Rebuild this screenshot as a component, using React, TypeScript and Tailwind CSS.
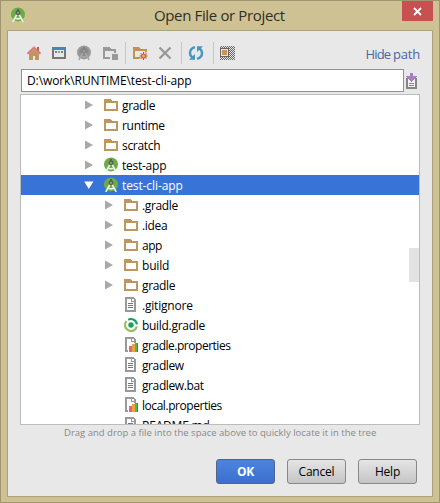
import React from "react";

type IconProps = { className?: string };

function StudioIcon({ className = "", gray = false }: IconProps & { gray?: boolean }) {
  return (
    <svg className={className} width="16" height="16" viewBox="0 0 16 16">
      <circle cx="8" cy="7.4" r="7" fill={gray ? "#9b9b9b" : "#6cac45"} />
      {gray && <circle cx="8" cy="7" r="4.6" fill="#8b8b8b" />}
      <path d="M7.2 2h1.6v2H7.2z" fill={gray ? "#777" : "#4e5a4c"} />
      <circle cx="8" cy="5.8" r="2.5" fill={gray ? "#858585" : "#59635a"} />
      <circle cx="8" cy="5.8" r="0.9" fill={gray ? "#aaa" : "#a9b3a5"} />
      <path
        d="M6.7 7.8 2.8 14.8M9.3 7.8l3.9 7M4.4 10.4q3.6 3 7.2 0"
        fill="none"
        stroke={gray ? "#a8a8a8" : "#eef3e9"}
        strokeWidth="1.7"
      />
    </svg>
  );
}

function FolderIcon() {
  return (
    <svg width="16" height="16" viewBox="0 0 16 16" shapeRendering="crispEdges">
      <path d="M1 2h6l2 2h6v10H1zM3 6v6h10V6z" fill="#bd9660" fillRule="evenodd" />
    </svg>
  );
}

function FileIcon({ chart = false }: { chart?: boolean }) {
  return (
    <svg width="16" height="16" viewBox="0 0 16 16" shapeRendering="crispEdges">
      <path d="M2 0h8l3 3v12H2zM4 2v11h7V5H8V2z" fill="#999" fillRule="evenodd" />
      <path d="M9 2h1l1 1v1H9z" fill="#f7f7f7" />
      {chart ? (
        <>
          <path d="M5 9h3V7h3V6h4v9H5z" fill="#fff" />
          <path d="M6 9h3v6H6z" fill="#e46a67" />
          <path d="M9 7h3v8H9z" fill="#eca044" />
          <path d="M12 6h3v9h-3z" fill="#4cbb4a" />
          <path d="M14 6h1v9h-1z" fill="#338f3c" />
        </>
      ) : (
        <path d="M5 6h5v1H5zM5 8h5v1H5zM5 10h5v1H5z" fill="#4385ad" />
      )}
    </svg>
  );
}

function GradleIcon() {
  return (
    <svg width="16" height="16" viewBox="0 0 16 16">
      <path d="M5.2 2.7A6 6 0 0 1 13.9 7.4" fill="none" stroke="#17a05e" strokeWidth="2.2" />
      <path d="M13.8 9.4A6 6 0 1 1 3.4 4.1" fill="none" stroke="#92bf5c" strokeWidth="2.2" />
      <circle cx="8" cy="8" r="2.7" fill="#17a05e" />
    </svg>
  );
}

type Kind = "folder" | "studio" | "file" | "chart" | "gradle";
type Row = { name: string; kind: Kind; nested?: boolean; open?: boolean; spacing: string };

const rows: Row[] = [
  { name: "gradle", kind: "folder", spacing: "tracking-[-0.35px]" },
  { name: "runtime", kind: "folder", spacing: "tracking-[-0.3px]" },
  { name: "scratch", kind: "folder", spacing: "tracking-[-0.3px]" },
  { name: "test-app", kind: "studio", spacing: "tracking-[-0.25px]" },
  { name: "test-cli-app", kind: "studio", open: true, spacing: "tracking-[-0.1px]" },
  { name: ".gradle", kind: "folder", nested: true, spacing: "tracking-[-0.35px]" },
  { name: ".idea", kind: "folder", nested: true, spacing: "tracking-[-0.3px]" },
  { name: "app", kind: "folder", nested: true, spacing: "tracking-[-0.5px]" },
  { name: "build", kind: "folder", nested: true, spacing: "tracking-[-0.2px]" },
  { name: "gradle", kind: "folder", nested: true, spacing: "tracking-[-0.35px]" },
  { name: ".gitignore", kind: "file", nested: true, spacing: "tracking-[-0.2px]" },
  { name: "build.gradle", kind: "gradle", nested: true, spacing: "tracking-[-0.3px]" },
  { name: "gradle.properties", kind: "chart", nested: true, spacing: "tracking-[-0.48px]" },
  { name: "gradlew", kind: "file", nested: true, spacing: "tracking-[-0.4px]" },
  { name: "gradlew.bat", kind: "file", nested: true, spacing: "tracking-[-0.4px]" },
  { name: "local.properties", kind: "chart", nested: true, spacing: "tracking-[-0.45px]" },
  { name: "README.md", kind: "file", nested: true, spacing: "tracking-[-0.2px]" },
];

function KindIcon({ kind }: { kind: Kind }) {
  if (kind === "folder") return <FolderIcon />;
  if (kind === "studio") return <StudioIcon />;
  if (kind === "gradle") return <GradleIcon />;
  return <FileIcon chart={kind === "chart"} />;
}

function TreeRow({ row }: { row: Row }) {
  const expandable = row.kind === "folder" || row.kind === "studio";
  return (
    <div
      className={`flex h-5 shrink-0 items-center ${row.nested ? "pl-[82px]" : "pl-[62px]"} ${
        row.open ? "bg-[#3874d7] text-white" : "text-black"
      }`}
    >
      <svg className="mr-1 shrink-0" width="16" height="16" viewBox="0 0 16 16">
        {expandable &&
          (row.open ? (
            <path d="M1.2 4.5h9.2L5.8 12z" fill="#fff" />
          ) : (
            <path d="M2 3.5v9l8-4.5z" fill="#a9a9a9" />
          ))}
      </svg>
      <span className="mr-[3px] shrink-0">
        <KindIcon kind={row.kind} />
      </span>
      <span className={`pt-[2px] text-[12px] leading-5 ${row.spacing}`}>{row.name}</span>
    </div>
  );
}

function Separator() {
  return <span className="h-[22px] w-px bg-[#c8c8c8]" />;
}

function Toolbar() {
  return (
    <div className="flex h-[22px] items-center pl-[18px]">
      <svg width="16" height="16" viewBox="0 0 16 16">
        <path d="M3 8.5 8 4l5 4.5V15H9v-4H7v4H3z" fill="#bd9662" />
        <path d="M11 2h2v4h-2z" fill="#b0635c" />
        <path d="M1.5 8.7 8 2.7l6.5 6" fill="none" stroke="#dc7874" strokeWidth="2" />
      </svg>
      <svg className="ml-[9px]" width="16" height="16" viewBox="0 0 16 16" shapeRendering="crispEdges">
        <path d="M1 2h14v12H1zM3 5v7h10V5z" fill="#777" fillRule="evenodd" />
        <path d="M1 2h14v3H1z" fill="#3d8abb" />
        <path d="M4 6h2v2H4zM10 6h2v2h-2z" fill="#498db5" />
        <path d="M7 6h2v2H7z" fill="#d48d42" />
      </svg>
      <StudioIcon className="ml-[9px]" gray />
      <svg className="ml-[10px]" width="16" height="16" viewBox="0 0 16 16" shapeRendering="crispEdges">
        <path d="M1 2h6l2 2h5v4h-2V6H3v6h5v2H1z" fill="#999" />
        <path d="M10 9h6v6h-6z" fill="#999" />
      </svg>
      <span className="ml-[7px] flex"><Separator /></span>
      <svg className="ml-[6px]" width="17" height="16" viewBox="0 0 17 16">
        <path d="M1 2h6l2 2h6v10H1zM3 6v6h10V6z" fill="#c39250" fillRule="evenodd" />
        <path d="M11.5 6v10M6.5 11h10M8 7.5l7 7M15 7.5l-7 7" stroke="#e8e8e8" strokeWidth="1.8" />
        <path d="M11.5 7v8M7.5 11h8M8.7 8.2l5.6 5.6M14.3 8.2l-5.6 5.6" stroke="#ce4c2b" strokeWidth="1" />
        <circle cx="11.5" cy="11" r="2" fill="#efb06b" stroke="#ce4c2b" />
      </svg>
      <svg className="ml-[8px] mr-px" width="16" height="16" viewBox="0 0 16 16">
        <path d="m2.5 2.5 11 11m0-11-11 11" stroke="#999" strokeWidth="2.4" />
      </svg>
      <span className="ml-[7px] flex"><Separator /></span>
      <svg className="ml-[6px] mr-px" width="16" height="16" viewBox="0 0 16 16">
        <path d="M7 2.2Q2 3.4 2 8q0 2.8 2.8 4.8M9 13.8q5-1.2 5-5.8 0-2.8-2.8-4.8" fill="none" stroke="#4795c2" strokeWidth="2.4" />
        <path d="M1 14.8h6V9zM15 1.2H9V7z" fill="#4795c2" />
      </svg>
      <span className="ml-[8px] flex"><Separator /></span>
      <svg className="ml-[6px]" width="16" height="16" viewBox="0 0 16 16" shapeRendering="crispEdges">
        <defs>
          <pattern id="checks" width="2" height="2" patternUnits="userSpaceOnUse">
            <path d="M0 0h1v1H0zM1 1h1v1H1z" fill="#666" />
          </pattern>
        </defs>
        <path d="M0 1h15v14H0z" fill="url(#checks)" />
        <path d="M0 3h9v9H0z" fill="#666" />
        <path d="M1 4h7v7H1z" fill="#eee4d4" />
        <path d="M2 5h5v5H2z" fill="#cf924d" />
      </svg>
      <span className="ml-auto mr-[12px] pt-px text-[13px] leading-5 tracking-[-0.75px] text-[#4c65a5]">
        <span className="tracking-[-0.8px]">Hide</span> <span className="tracking-[-0.2px]">path</span>
      </span>
    </div>
  );
}

export default function App() {
  return (
    <div className="flex h-[503px] w-[440px] flex-col border border-[#a0966d] bg-[#cec294] font-['Open_Sans','Noto_Sans',sans-serif]">
      <header className="flex h-[29px] shrink-0 items-start pl-[9px]">
        <StudioIcon className="mt-[6px]" />
        <h1 className="ml-[128px] mt-[2px] whitespace-nowrap text-[15px] leading-6 tracking-[-0.36px] text-[#302e25]">
          Open File or Project
        </h1>
        <div className="ml-auto mr-[6px] flex h-5 w-[31px] items-center justify-center bg-[#c75050]">
          <svg width="9" height="9" viewBox="0 0 9 9">
            <path d="m1 1 7 7m0-7L1 8" stroke="#fff" strokeWidth="1.8" />
          </svg>
        </div>
      </header>
      <main className="ml-[6px] flex h-[467px] w-[426px] flex-col border border-[#ada27a] bg-[#e8e8e8] pt-[11px]">
        <Toolbar />
        <div className="ml-[13px] mt-[5px] flex h-[23px] items-center">
          <div className="flex h-[23px] w-[383px] items-center border border-[#919191] bg-white pl-[5px] text-[12px] tracking-[-0.1px] text-black">
            D:\work\RUNTIME\test-cli-app
          </div>
          <svg className="ml-[1px]" width="14" height="18" viewBox="0 0 14 18" shapeRendering="crispEdges">
            <path d="M1 6h2v9h7V6h2v11H1z" fill="#858585" />
            <path d="M3 6h7v9H3z" fill="#f2f2f2" />
            <path d="M4 11h5v1H4zM4 13h5v1H4z" fill="#888" />
            <path d="M5 1h3v3h4v1l-5.5 5L1 5V4h4z" fill="#a77fc0" />
          </svg>
        </div>
        <div className="ml-3 mt-[2px] flex h-[331px] w-[400px] flex-col overflow-hidden border border-[#bcbcbc] bg-white">
          <div className="flex">
            <div className="flex h-[329px] w-[398px] flex-col overflow-hidden">
              {rows.map((row, i) => (
                <TreeRow key={i} row={row} />
              ))}
            </div>
            <div className="-ml-[10px] mt-[153px] h-[34px] w-[10px] bg-[#e3e3e3]" />
          </div>
        </div>
        <p className="ml-[56px] whitespace-nowrap text-[9.5px] leading-4 text-[#888]">
          Drag and drop a file into the space above to quickly locate it in the tree
        </p>
        <div className="ml-[208px] mt-[18px] flex gap-3 text-[12px] tracking-[-0.2px] text-black">
          <button className="h-[25px] w-[59px] rounded-[3px] border border-[#51658c] bg-linear-to-b from-[#4b84df] to-[#3b70cd] font-bold text-white">
            OK
          </button>
          <button className="h-[25px] w-[59px] rounded-[3px] border border-[#888] bg-linear-to-b from-[#e5e5e5] to-[#c5c5c5]">
            Cancel
          </button>
          <button className="h-[25px] w-[59px] rounded-[3px] border border-[#888] bg-linear-to-b from-[#e5e5e5] to-[#c5c5c5]">
            Help
          </button>
        </div>
      </main>
    </div>
  );
}
